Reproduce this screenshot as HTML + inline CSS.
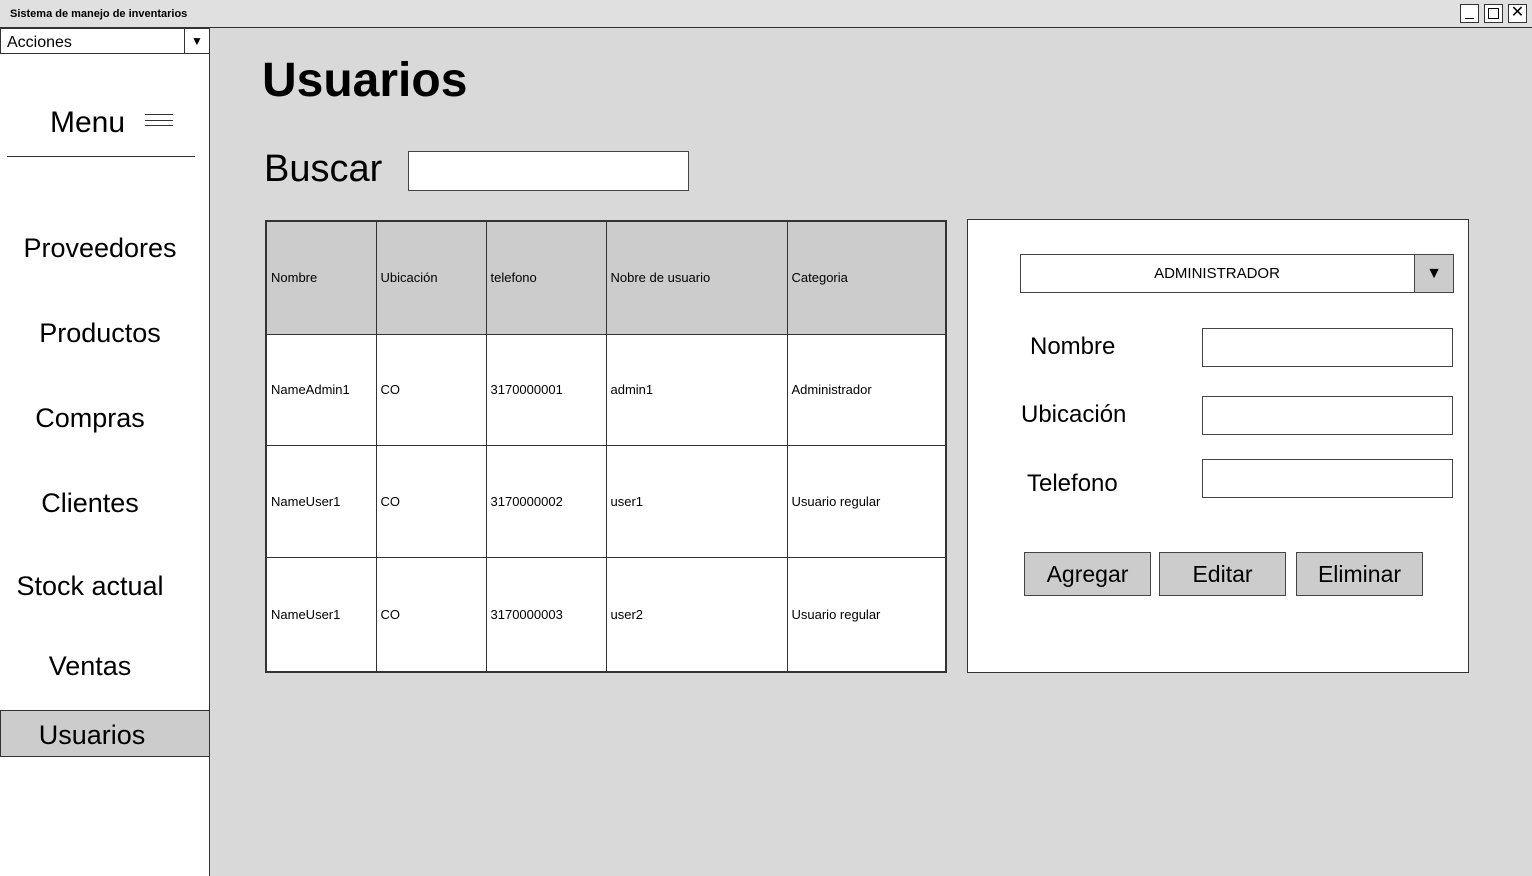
<!DOCTYPE html>
<html><head><meta charset="utf-8"><style>
*{margin:0;padding:0;box-sizing:border-box}
body{width:1532px;height:876px;overflow:hidden;background:#d9d9d9;font-family:"Liberation Sans",sans-serif;position:relative;color:#000}
.abs{position:absolute}
.tb{left:0;top:0;width:1532px;height:28px;background:#e0e0e0;border-bottom:1px solid #333}
.side{left:0;top:28px;width:210px;height:848px;background:#fff;border-right:1px solid #333}
.nav{position:absolute;font-size:27px;text-align:center;width:200px}
table{border-collapse:collapse;position:absolute;left:265px;top:220px;width:682px;height:453px;background:#fff;border:2px solid #333}
td,th{border:1px solid #333;font-size:13px;font-weight:normal;text-align:left;padding-left:4px}
th{background:#cccccc;height:113px}
.inp{position:absolute;background:#fff;border:1px solid #444}
.btn{position:absolute;background:#cccccc;border:1px solid #444;font-size:23px;text-align:center;line-height:42px;height:44px;width:127px}
.lbl{position:absolute;font-size:24px}
.wb{position:absolute;top:4px;width:19px;height:19px;border:1px solid #333;background:#fff}
</style></head><body>
<div class="abs tb"><div class="abs" style="left:10px;top:8px;font-size:11px;font-weight:bold">Sistema de manejo de inventarios</div>
<div class="wb" style="left:1460px"></div><div class="wb" style="left:1484px"></div><div class="wb" style="left:1508px;font-size:16px;line-height:16px;text-align:center">✕</div>
<div class="abs" style="left:1465px;top:18px;width:9px;border-top:1px solid #000"></div>
<div class="abs" style="left:1488px;top:8px;width:11px;height:11px;border:1px solid #000"></div>
</div>
<div class="abs side">
<div class="abs" style="left:0;top:0;width:210px;height:26px;border:1px solid #333;background:#fff"><span style="position:absolute;left:6px;top:5px;font-size:16px">Acciones</span><div style="position:absolute;right:0;top:0;width:25px;height:24px;border-left:1px solid #333;font-size:12px;text-align:center;line-height:24px">▼</div></div>
<div class="abs" style="left:50px;top:78px;font-size:30px">Menu</div>
<div class="abs" style="left:145px;top:86px;width:28px;height:12px;border-top:1px solid #333;border-bottom:1px solid #333"></div>
<div class="abs" style="left:145px;top:92px;width:28px;border-top:1px solid #333"></div>
<div class="abs" style="left:7px;top:128px;width:188px;border-top:1px solid #333"></div>
<div class="nav" style="left:0;top:205px">Proveedores</div>
<div class="nav" style="left:0;top:290px">Productos</div>
<div class="nav" style="left:-10px;top:375px">Compras</div>
<div class="nav" style="left:-10px;top:460px">Clientes</div>
<div class="nav" style="left:-10px;top:543px">Stock actual</div>
<div class="nav" style="left:-10px;top:623px">Ventas</div>
<div class="abs" style="left:0;top:682px;width:210px;height:47px;background:#cccccc;border:1px solid #333"></div>
<div class="nav" style="left:-8px;top:692px">Usuarios</div>
</div>
<div class="abs" style="left:262px;top:53px;font-size:48px;font-weight:bold">Usuarios</div>
<div class="abs" style="left:264px;top:148px;font-size:38px">Buscar</div>
<div class="inp" style="left:408px;top:151px;width:281px;height:40px"></div>
<table>
<tr><th style="width:110px">Nombre</th><th style="width:110px">Ubicación</th><th style="width:120px">telefono</th><th style="width:181px">Nobre de usuario</th><th>Categoria</th></tr>
<tr><td>NameAdmin1</td><td>CO</td><td>3170000001</td><td>admin1</td><td>Administrador</td></tr>
<tr><td>NameUser1</td><td>CO</td><td>3170000002</td><td>user1</td><td>Usuario regular</td></tr>
<tr><td>NameUser1</td><td>CO</td><td>3170000003</td><td>user2</td><td>Usuario regular</td></tr>
</table>
<div class="abs" style="left:967px;top:219px;width:502px;height:454px;background:#fff;border:1px solid #333"></div>
<div class="inp" style="left:1020px;top:254px;width:434px;height:39px;font-size:15px;line-height:37px;text-align:center;padding-right:40px">ADMINISTRADOR<div style="position:absolute;right:0;top:0;width:39px;height:37px;background:#ccc;border-left:1px solid #444;font-size:16px;line-height:37px;text-align:center">▼</div></div>
<div class="lbl" style="left:1030px;top:333px">Nombre</div>
<div class="lbl" style="left:1021px;top:401px">Ubicación</div>
<div class="lbl" style="left:1027px;top:470px">Telefono</div>
<div class="inp" style="left:1202px;top:328px;width:251px;height:39px"></div>
<div class="inp" style="left:1202px;top:396px;width:251px;height:39px"></div>
<div class="inp" style="left:1202px;top:459px;width:251px;height:39px"></div>
<div class="btn" style="left:1024px;top:552px">Agregar</div>
<div class="btn" style="left:1159px;top:552px">Editar</div>
<div class="btn" style="left:1296px;top:552px">Eliminar</div>
</body></html>
